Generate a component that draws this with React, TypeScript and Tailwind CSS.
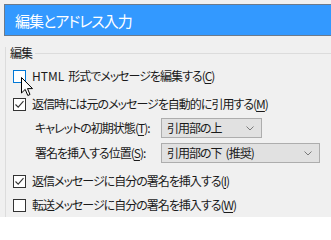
import React from "react";

const Check = ({ checked, hover }: { checked?: boolean; hover?: boolean }) => (
  <div
    className={
      "w-[13px] h-[13px] shrink-0 border bg-white flex items-center justify-center " +
      (hover ? "border-[#0078d7]" : "border-[#333333]")
    }
  >
    {checked && (
      <svg width="11" height="11" viewBox="0 0 11 11">
        <path d="M1.5 5.5 L4.2 8.2 L9.5 2.2" fill="none" stroke="#333" strokeWidth="1.1" />
      </svg>
    )}
  </div>
);

const Key = ({ k }: { k: string }) => (
  <span>
    (<span className="underline underline-offset-2">{k}</span>)
  </span>
);

const Select = ({ children, w }: { children: React.ReactNode; w: string }) => (
  <div
    className={
      "h-[20px] border border-[#adadad] bg-[#e1e1e1] flex items-center justify-between pl-[5px] pr-[7px] " +
      w
    }
  >
    <span className="whitespace-nowrap">{children}</span>
    <svg width="8" height="5" viewBox="0 0 8 5">
      <path d="M0.5 0.5 L4 4 L7.5 0.5" fill="none" stroke="#7a7a7a" strokeWidth="1" />
    </svg>
  </div>
);

export default function App() {
  return (
    <div
      className="relative w-[331px] h-[217px] overflow-hidden bg-[#f0f0f0] text-[12px] tracking-[-1px] leading-none text-[#1a1a1a] pt-[4px] [font-feature-settings:'palt']"
      style={{ fontFamily: '"Noto Sans CJK JP", "Noto Sans", sans-serif' }}
    >
      <div className="ml-[4px] h-[32px] border-y border-l border-[#6b7a8c] bg-[#3399ff] flex items-center pl-[10px] text-white text-[15px]">
        編集とアドレス入力
      </div>

      <div className="ml-[5px] mt-[11px] border-l border-[#dcdcdc] h-[170px]">
        <div className="flex items-center h-[12px]">
          <span className="ml-[4px] mr-[3px]">編集</span>
          <div className="flex-1 border-t border-[#dcdcdc]" />
        </div>

        <div className="mt-[7px] h-[20px] flex items-center pl-[7px] gap-[6px]">
          <Check hover />
          <span className="whitespace-nowrap">
            <span className="mr-[4px] tracking-[0px]">HTML</span>形式でメッセージを編集する<Key k="C" />
          </span>
        </div>

        <div className="mt-[8px] h-[20px] flex items-center pl-[7px] gap-[6px]">
          <Check checked />
          <span className="whitespace-nowrap">
            返信時には元のメッセージを自動的に引用する<Key k="M" />
          </span>
        </div>

        <div className="mt-[4px] h-[20px] flex items-center pl-[29px]">
          <span className="w-[126px] whitespace-nowrap">
            キャレットの初期状態<Key k="T" />:
          </span>
          <Select w="w-[101px]">引用部の上</Select>
        </div>

        <div className="mt-[5px] h-[20px] flex items-center pl-[29px]">
          <span className="w-[126px] whitespace-nowrap">
            署名を挿入する位置<Key k="S" />:
          </span>
          <Select w="w-[159px]">
            引用部の下<span className="ml-[4px]">(推奨)</span>
          </Select>
        </div>

        <div className="mt-[8px] h-[20px] flex items-center pl-[7px] gap-[6px]">
          <Check checked />
          <span className="whitespace-nowrap">
            返信メッセージに自分の署名を挿入する<Key k="I" />
          </span>
        </div>

        <div className="mt-[4px] h-[20px] flex items-center pl-[7px] gap-[6px]">
          <Check />
          <span className="whitespace-nowrap">
            転送メッセージに自分の署名を挿入する<Key k="W" />
          </span>
        </div>
      </div>

      <svg
        className="absolute left-[21px] top-[77px]"
        width="13"
        height="20"
        viewBox="0 0 13 20"
      >
        <path
          d="M0.5 0.5 L0.5 16 L4.2 12.4 L6.8 18.5 L9 17.5 L6.5 11.6 L11.5 11.6 Z"
          fill="white"
          stroke="black"
          strokeWidth="1"
          strokeLinejoin="miter"
        />
      </svg>
    </div>
  );
}
